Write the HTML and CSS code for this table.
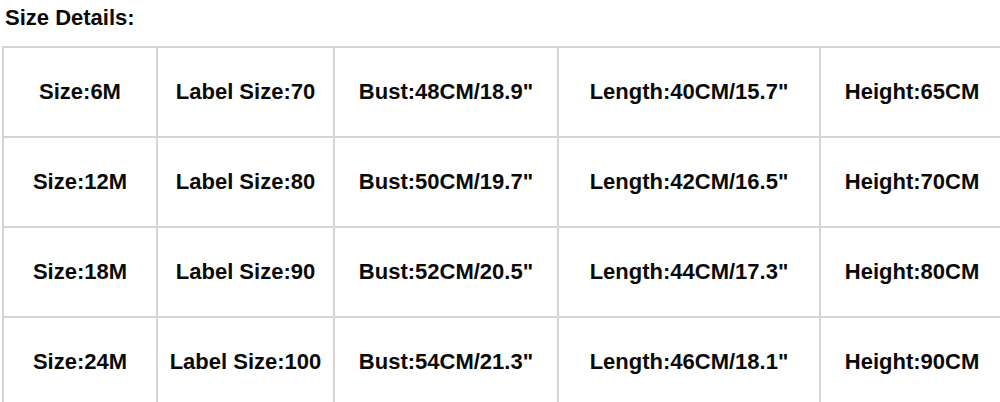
FILE: index.html
```html
<!DOCTYPE html>
<html>
<head>
<meta charset="utf-8">
<link rel="stylesheet" href="styles.css">
</head>
<body>
<div class="title">Size Details:</div>
<table class="sizes">
  <colgroup>
    <col class="c1"><col class="c2"><col class="c3"><col class="c4"><col class="c5">
  </colgroup>
  <tr><td>Size:6M</td><td>Label Size:70</td><td>Bust:48CM/18.9"</td><td>Length:40CM/15.7"</td><td>Height:65CM</td></tr>
  <tr><td>Size:12M</td><td>Label Size:80</td><td>Bust:50CM/19.7"</td><td>Length:42CM/16.5"</td><td>Height:70CM</td></tr>
  <tr><td>Size:18M</td><td>Label Size:90</td><td>Bust:52CM/20.5"</td><td>Length:44CM/17.3"</td><td>Height:80CM</td></tr>
  <tr><td>Size:24M</td><td>Label Size:100</td><td>Bust:54CM/21.3"</td><td>Length:46CM/18.1"</td><td>Height:90CM</td></tr>
</table>
</body>
</html>
```
FILE: styles.css
```css
html, body {
  margin: 0;
  padding: 0;
  background: #fff;
}
body {
  font-family: "Liberation Sans", Arial, sans-serif;
  font-weight: bold;
  color: #0a0a0a;
  font-size: 22px;
  overflow: hidden;
}
.title {
  padding: 5px 0 0 5px;
  line-height: 25px;
  height: 41px;
}
.sizes {
  margin-left: 2px;
  border-collapse: collapse;
  table-layout: fixed;
  width: 1001px;
}
.c1 { width: 154px; }
.c2 { width: 177px; }
.c3 { width: 224px; }
.c4 { width: 262px; }
.c5 { width: 184px; }
.sizes td {
  border: 2px solid #d4d4d4;
  height: 88px;
  padding: 0;
  text-align: center;
  vertical-align: middle;
  white-space: nowrap;
}
```
